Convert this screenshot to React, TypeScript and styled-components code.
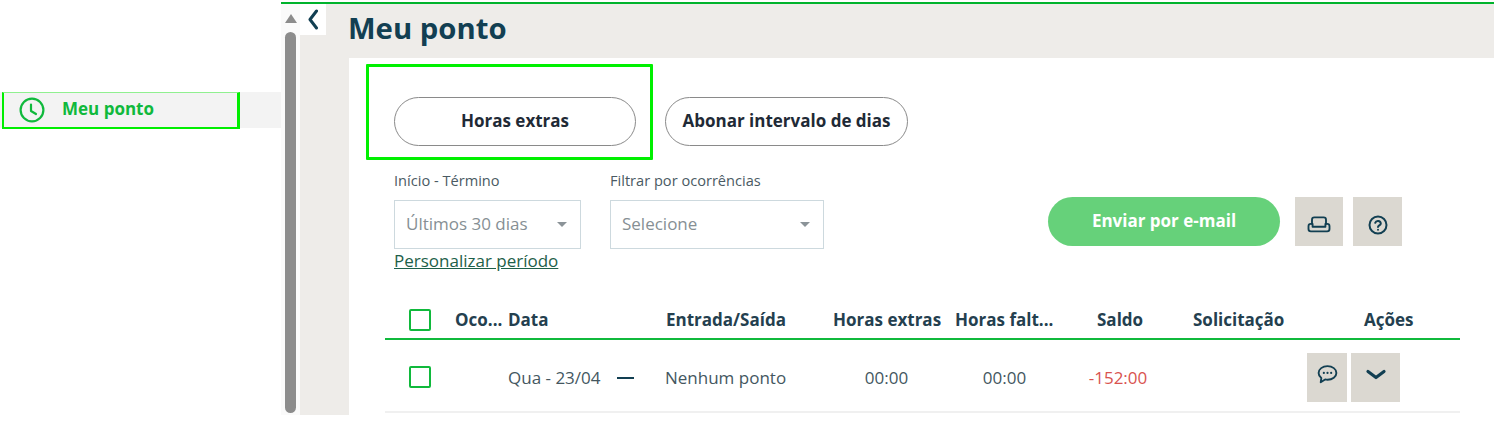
import React from "react";
import styled, { createGlobalStyle } from "styled-components";

const Global = createGlobalStyle`
  html, body { margin: 0; padding: 0; background: #fff; overflow: hidden; }
  body { font-family: "Open Sans", "Noto Sans", sans-serif; }
  * { box-sizing: border-box; }
`;

const Page = styled.div`
  display: flex;
  width: 1494px;
  height: 424px;
  overflow: hidden;
`;

const Sidebar = styled.aside`
  width: 281px;
  flex: none;
  padding-top: 92px;
`;

const NavRow = styled.div`
  height: 36px;
  background: #f3f3f3;
`;

const NavHighlight = styled.div`
  display: flex;
  align-items: center;
  gap: 17px;
  margin-left: 2px;
  width: 238px;
  height: 37px;
  padding-left: 15px;
  border-style: solid;
  border-color: #00ee00;
  border-width: 1px 3px 2px 2px;
  border-top-color: #90f090;
  color: #10b93c;
  font-size: 17px;
  font-weight: 700;
`;

const NavLabel = styled.span`
  margin-top: -3px;
`;

const Main = styled.main`
  flex: 1;
  min-width: 0;
  height: 413px;
  margin-top: 2px;
  border-top: 2px solid #00b32c;
  display: flex;
  flex-direction: column;
`;

const MainBody = styled.div`
  flex: 1;
  min-height: 0;
  display: flex;
`;

const Scrollbar = styled.div`
  width: 19px;
  flex: none;
  background: #fafafa;
  display: flex;
  flex-direction: column;
  align-items: center;
  padding-top: 10px;
`;

const ScrollArrow = styled.div`
  width: 0;
  height: 0;
  border-left: 6px solid transparent;
  border-right: 6px solid transparent;
  border-bottom: 9px solid #8c8c8c;
`;

const ScrollThumb = styled.div`
  width: 11px;
  height: 381px;
  margin-top: 9px;
  border-radius: 6px;
  background: #8c8c8c;
`;

const Shell = styled.div`
  flex: 1;
  min-width: 0;
  background: #eeece9;
  display: flex;
  align-items: flex-start;
`;

const CollapseButton = styled.div`
  width: 26px;
  height: 31px;
  flex: none;
  background: #fff;
  display: flex;
  justify-content: center;
  padding-top: 5px;
  color: #123f52;
`;

const Column = styled.div`
  flex: 1;
  min-width: 0;
  margin-left: 23px;
  display: flex;
  flex-direction: column;
  height: 100%;
`;

const Title = styled.h1`
  margin: 0;
  height: 54px;
  font-size: 29.3px;
  line-height: 48px;
  font-weight: 700;
  color: #123f52;
  text-indent: -1px;
`;

const Panel = styled.section`
  flex: 1;
  min-height: 0;
  background: #fff;
  padding: 6px 0 0 17px;
`;

const ButtonRow = styled.div`
  display: flex;
  align-items: flex-start;
  gap: 12px;
`;

const Highlight = styled.div`
  width: 287px;
  height: 96px;
  padding: 30px 0 0 25px;
  border: 3px solid #00f000;
  border-radius: 1px;
`;

const PillButton = styled.button<{ $width: number }>`
  width: ${(p) => p.$width}px;
  height: 49px;
  border: 1px solid #8a8a8a;
  border-radius: 25px;
  background: #fff;
  color: #1f2a36;
  font: 700 17px "Open Sans", sans-serif;
  padding: 0 0 3px;
`;

const OffsetPill = styled(PillButton)`
  margin-top: 33px;
`;

const Filters = styled.div`
  display: flex;
  align-items: flex-start;
  margin: 11px 0 0 28px;
`;

const Field = styled.div<{ $width: number }>`
  width: ${(p) => p.$width}px;
  flex: none;
`;

const FieldLabel = styled.div`
  font-size: 14.6px;
  line-height: 18px;
  height: 19px;
  color: #4a5a63;
`;

const SelectBox = styled.div<{ $width: number }>`
  width: ${(p) => p.$width}px;
  height: 49px;
  margin-top: 10px;
  border: 1px solid #cdd9de;
  display: flex;
  align-items: center;
  justify-content: space-between;
  padding: 0 13px 2px 11px;
  color: #868f94;
  font-size: 17px;
`;

const Caret = styled.span`
  width: 0;
  height: 0;
  margin-top: 2px;
  border-left: 5.5px solid transparent;
  border-right: 5.5px solid transparent;
  border-top: 5.5px solid #8b9398;
`;

const PeriodLink = styled.a`
  display: block;
  font-size: 17px;
  line-height: 24px;
  color: #1d6049;
  text-decoration: underline;
`;

const Actions = styled.div`
  display: flex;
  align-items: center;
  margin: 26px 0 0 9px;
`;

const SendButton = styled.button`
  width: 232px;
  height: 49px;
  border: 0;
  border-radius: 25px;
  background: #66d17a;
  color: #fff;
  font: 700 17px "Open Sans", sans-serif;
  padding: 0 0 3px;
`;

const SquareButton = styled.button<{ $w: number; $ml: number }>`
  width: ${(p) => p.$w}px;
  height: 49px;
  margin-left: ${(p) => p.$ml}px;
  border: 0;
  padding: 0;
  flex: none;
  background: #dbd8d1;
  color: #123f52;
  display: flex;
  align-items: center;
  justify-content: center;
`;

const Table = styled.div`
  width: 1075px;
  margin: 29px 0 0 19px;
`;

const Grid = styled.div<{ $h: number; $line: string; $pt?: number }>`
  display: grid;
  grid-template-columns: 70px 53px 157px 168px 122px 110px 110px 125px 160px;
  align-items: center;
  height: ${(p) => p.$h}px;
  padding-top: ${(p) => p.$pt ?? 0}px;
  border-bottom: 2px solid ${(p) => p.$line};
`;

const Head = styled.div<{ $pl?: number }>`
  font-size: 17px;
  font-weight: 700;
  color: #24404f;
  padding-left: ${(p) => p.$pl ?? 0}px;
  padding-bottom: 1px;
  white-space: nowrap;
`;

const Cell = styled.div<{ $pr?: number; $align?: string; $color?: string }>`
  font-size: 17px;
  color: ${(p) => p.$color ?? "#44575f"};
  text-align: ${(p) => p.$align ?? "left"};
  padding-right: ${(p) => p.$pr ?? 0}px;
  white-space: nowrap;
`;

const CheckCell = styled.div`
  padding-left: 24px;
`;

const Check = styled.div`
  width: 22px;
  height: 22px;
  border: 2px solid #10b93c;
  border-radius: 2px;
`;

const DateCell = styled(Cell)`
  display: flex;
  align-items: center;
  gap: 16px;
`;

const Dash = styled.span`
  width: 17px;
  height: 2px;
  background: #123f52;
  margin-top: 2px;
`;

const ActionCell = styled.div`
  display: flex;
  padding-left: 7px;
`;

export default function App() {
  return (
    <Page>
      <Global />
      <Sidebar>
        <NavRow>
          <NavHighlight>
            <svg width="26" height="26" viewBox="0 0 26 26" fill="none" stroke="currentColor" strokeWidth="2.2" strokeLinecap="round" strokeLinejoin="round">
              <circle cx="13" cy="13" r="11.4" />
              <path d="M12 7.500v6.500l5 3" />
            </svg>
            <NavLabel>Meu ponto</NavLabel>
          </NavHighlight>
        </NavRow>
      </Sidebar>
      <Main>
        <MainBody>
          <Scrollbar>
            <ScrollArrow />
            <ScrollThumb />
          </Scrollbar>
          <Shell>
            <CollapseButton>
              <svg width="12" height="21" viewBox="0 0 12 21" fill="none" stroke="currentColor" strokeWidth="3" strokeLinecap="round" strokeLinejoin="round">
                <path d="M9.500 2 3 10.500l6.500 8.500" />
              </svg>
            </CollapseButton>
            <Column>
              <Title>Meu ponto</Title>
              <Panel>
                <ButtonRow>
                  <Highlight>
                    <PillButton $width={242}>Horas extras</PillButton>
                  </Highlight>
                  <OffsetPill $width={243}>Abonar intervalo de dias</OffsetPill>
                </ButtonRow>
                <Filters>
                  <Field $width={216}>
                    <FieldLabel>Início - Término</FieldLabel>
                    <SelectBox $width={187}>
                      Últimos 30 dias
                      <Caret />
                    </SelectBox>
                    <PeriodLink>Personalizar período</PeriodLink>
                  </Field>
                  <Field $width={429}>
                    <FieldLabel>Filtrar por ocorrências</FieldLabel>
                    <SelectBox $width={214}>
                      Selecione
                      <Caret />
                    </SelectBox>
                  </Field>
                  <Actions>
                    <SendButton>Enviar por e-mail</SendButton>
                    <SquareButton $w={48} $ml={15}>
                      <svg width="28" height="28" viewBox="0 0 24 24" fill="none" stroke="currentColor" strokeWidth="1.600" strokeLinecap="round" strokeLinejoin="round" style={{ marginTop: 6 }}>
                        <path d="M6 11V7.500a2 2 0 0 1 2-2h8a2 2 0 0 1 2 2V11" />
                        <path d="M3 13a2 2 0 0 1 2-2h1.500v2.500h11V11H19a2 2 0 0 1 2 2v2.500a2 2 0 0 1-2 2H5a2 2 0 0 1-2-2z" />
                      </svg>
                    </SquareButton>
                    <SquareButton $w={49} $ml={10}>
                      <svg width="22" height="22" viewBox="0 0 22 22" fill="none" stroke="currentColor" strokeWidth="2" strokeLinecap="round" strokeLinejoin="round" style={{ marginTop: 7 }}>
                        <circle cx="11" cy="11" r="8.500" />
                        <path d="M8.200 8.800a2.900 2.900 0 0 1 5.600.700c0 1.700-2.800 2.100-2.800 3.500" />
                        <path d="M11 15.700h.01" />
                      </svg>
                    </SquareButton>
                  </Actions>
                </Filters>
                <Table>
                  <Grid $h={38} $line="#10b93c">
                    <CheckCell>
                      <Check />
                    </CheckCell>
                    <Head>Oco...</Head>
                    <Head>Data</Head>
                    <Head $pl={1}>Entrada/Saída</Head>
                    <Head>Horas extras</Head>
                    <Head>Horas falt...</Head>
                    <Head $pl={32}>Saldo</Head>
                    <Head $pl={18}>Solicitação</Head>
                    <Head $pl={64}>Ações</Head>
                  </Grid>
                  <Grid $h={73} $line="#f0f0f0" $pt={3}>
                    <CheckCell>
                      <Check />
                    </CheckCell>
                    <div />
                    <DateCell>
                      Qua - 23/04
                      <Dash />
                    </DateCell>
                    <Cell>Nenhum ponto</Cell>
                    <Cell $align="center" $pr={15}>00:00</Cell>
                    <Cell $align="center" $pr={11}>00:00</Cell>
                    <Cell $align="center" $pr={4} $color="#d9534f">-152:00</Cell>
                    <div />
                    <ActionCell>
                      <SquareButton $w={40} $ml={0}>
                        <svg width="23" height="23" viewBox="0 0 22 22" fill="none" stroke="currentColor" strokeWidth="1.800" strokeLinecap="round" strokeLinejoin="round" style={{ marginTop: -6 }}>
                          <path d="M11 3c4.800 0 8.500 2.900 8.500 6.500S15.800 16 11 16c-.8 0-1.600-.1-2.300-.3L4.500 18.500l.6-4.100C3.500 13.200 2.500 11.500 2.500 9.500 2.500 5.900 6.200 3 11 3z" />
                          <path d="M7.500 9.500h.01M11 9.500h.01M14.500 9.500h.01" strokeWidth="2.100" />
                        </svg>
                      </SquareButton>
                      <SquareButton $w={49} $ml={4}>
                        <svg width="22" height="14" viewBox="0 0 22 14" fill="none" stroke="currentColor" strokeWidth="3.200" strokeLinecap="round" strokeLinejoin="round" style={{ marginTop: -4 }}>
                          <path d="M3 3.500 11 9.500l8-6" />
                        </svg>
                      </SquareButton>
                    </ActionCell>
                  </Grid>
                </Table>
              </Panel>
            </Column>
          </Shell>
        </MainBody>
      </Main>
    </Page>
  );
}
